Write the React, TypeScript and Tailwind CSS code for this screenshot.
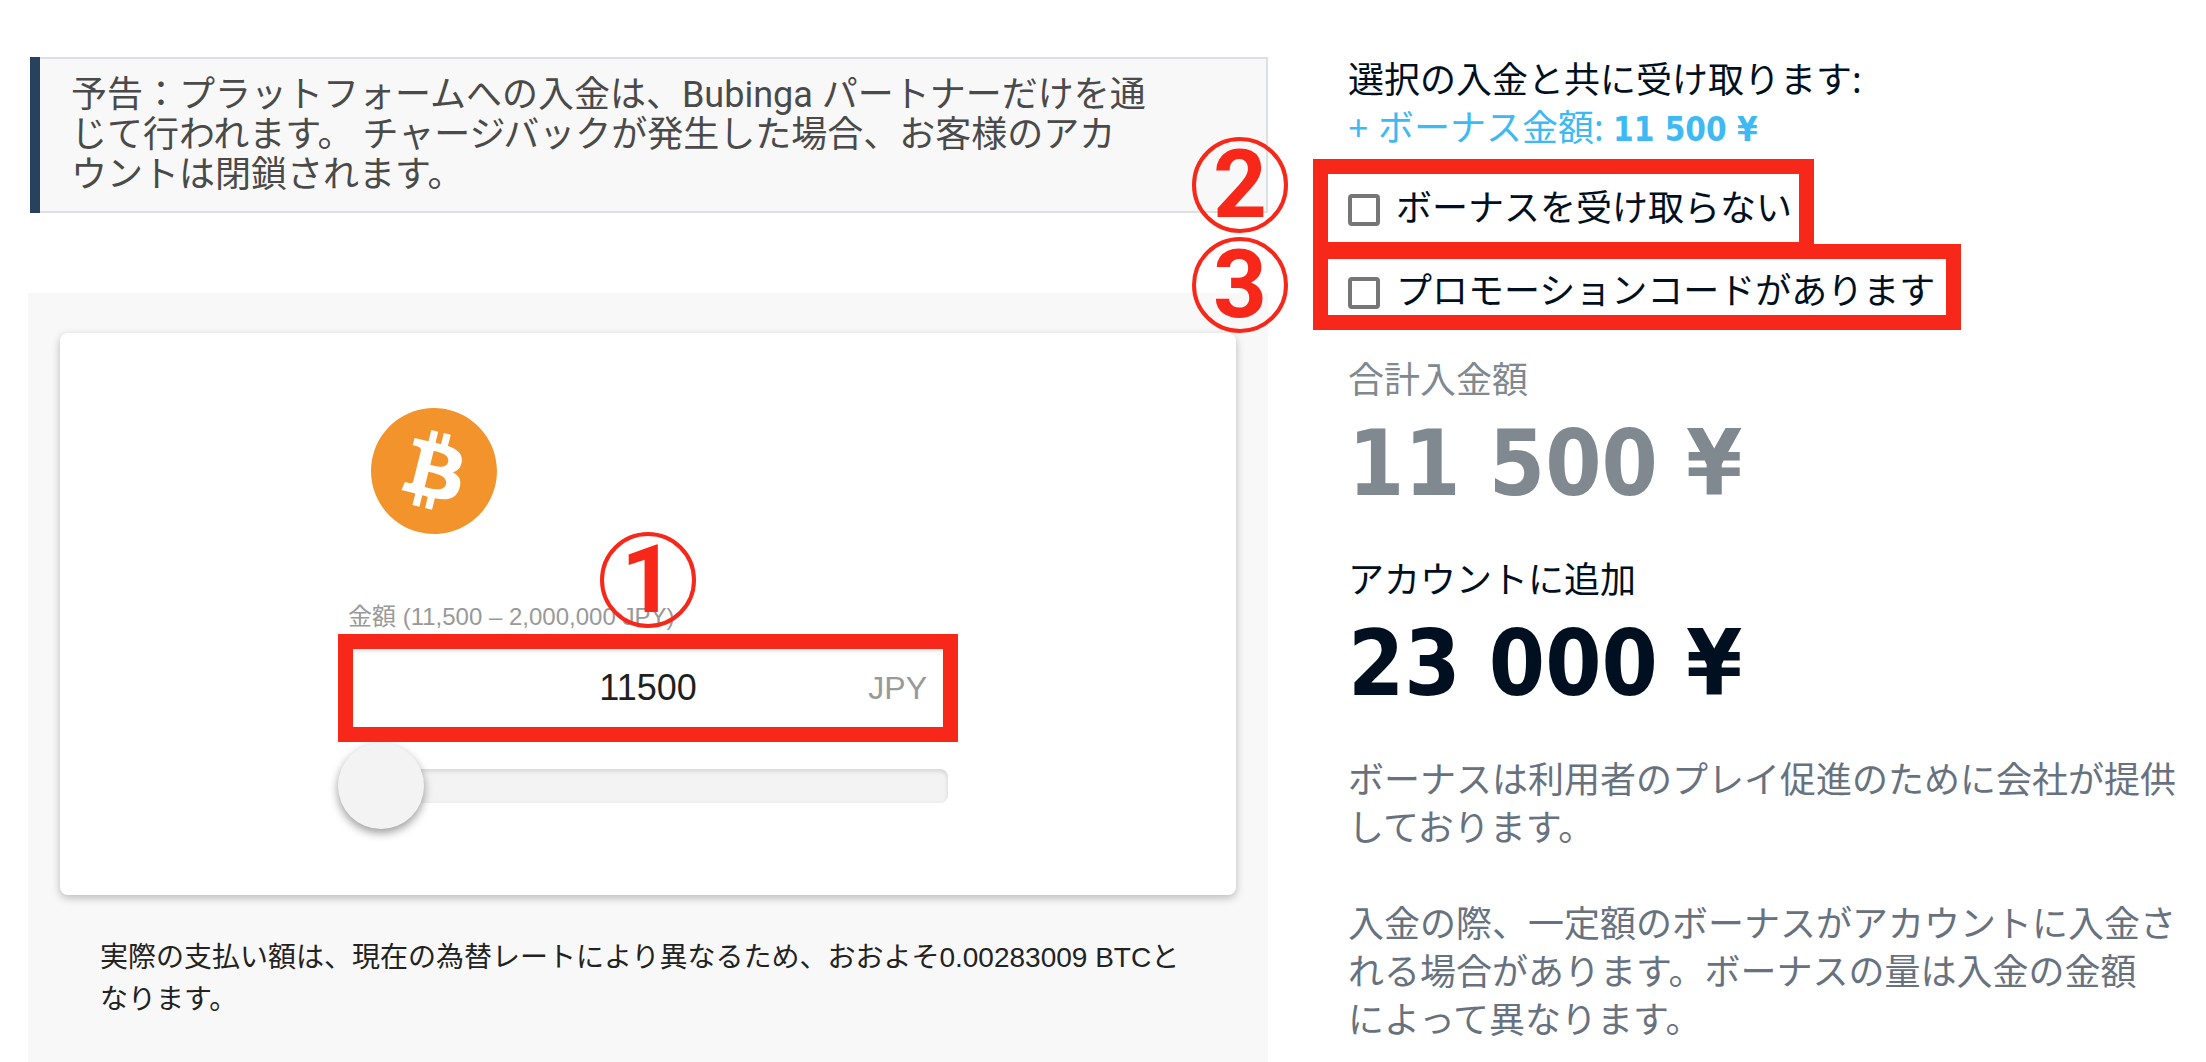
import React, { useState } from 'react';
import { SiBitcoin } from 'react-icons/si';

const MIN_AMOUNT = 11500;
const MAX_AMOUNT = 2000000;

const formatYen = (value: number) =>
  `${String(value).replace(/\B(?=(\d{3})+(?!\d))/g, ' ')} ¥`;

const Marker: React.FC<{ label: string; className: string }> = ({ label, className }) => (
  <span
    className={`absolute z-10 flex size-24 items-center justify-center rounded-full border-4 border-[#f72819] font-[Roboto,sans-serif] text-[94px] leading-none font-bold text-[#f72819] ${className}`}
  >
    {label}
  </span>
);

const Notice: React.FC = () => (
  <div className="ml-0.5 flex bg-[#27415e] pl-2.5">
    <div className="grow border-2 border-l-0 border-[#dce0e4] bg-[#f8f8f8] pt-4 pr-[116px] pb-4 pl-[31px]">
      <p className="font-[Roboto,'Noto_Sans_CJK_JP',sans-serif] text-[36px] leading-10 text-[#4a4a4a]">
        予告：プラットフォームへの入金は、Bubinga パートナーだけを通じて行われます。 チャージバックが発生した場合、お客様のアカウントは閉鎖されます。
      </p>
    </div>
  </div>
);

interface AmountFormProps {
  amount: number;
  onChange: (value: number) => void;
}

const AmountForm: React.FC<AmountFormProps> = ({ amount, onChange }) => (
  <div className="rounded-lg bg-white px-6 pt-[75px] pb-[66px] shadow-[0_3px_8px_rgba(0,0,0,0.25)]">
    <div className="mx-auto max-w-[620px]">
      <SiBitcoin className="ml-[33px] size-[126px] text-[#f2932c]" />
      <div className="relative mt-[67px]">
        <label htmlFor="amount" className="block pl-2.5 text-[24px] leading-8 text-[#999]">
          金額 (11,500 – 2,000,000 JPY)
        </label>
        <Marker label="1" className="-top-[69px] left-[262px]" />
      </div>
      <div className="relative mt-px border-[15px] border-[#f72819]">
        <input
          id="amount"
          type="text"
          inputMode="numeric"
          value={amount}
          onChange={(e) => onChange(Number(e.target.value.replace(/\D/g, '')))}
          className="block h-[78px] w-full bg-white text-center text-[36px] text-[#1f1f1f] shadow-[inset_0_3px_3px_rgba(0,0,0,0.08)] outline-none"
        />
        <span className="absolute inset-y-0 right-4 flex items-center text-[32px] text-[#999]">JPY</span>
      </div>
      <div className="pr-2.5 pl-2.5">
        <input
          type="range"
          aria-label="金額"
          min={MIN_AMOUNT}
          max={MAX_AMOUNT}
          step={500}
          value={amount}
          onChange={(e) => onChange(Number(e.target.value))}
          className="block h-[87px] w-full cursor-pointer appearance-none bg-transparent [&::-webkit-slider-runnable-track]:h-[34px] [&::-webkit-slider-runnable-track]:rounded-lg [&::-webkit-slider-runnable-track]:bg-[#f3f3f4] [&::-webkit-slider-runnable-track]:shadow-[inset_0_2px_5px_rgba(0,0,0,0.14)] [&::-webkit-slider-thumb]:-mt-[26px] [&::-webkit-slider-thumb]:-ml-2.5 [&::-webkit-slider-thumb]:size-[86px] [&::-webkit-slider-thumb]:appearance-none [&::-webkit-slider-thumb]:rounded-full [&::-webkit-slider-thumb]:bg-[#f3f3f3] [&::-webkit-slider-thumb]:shadow-[0_4px_10px_rgba(0,0,0,0.4)]"
        />
      </div>
    </div>
  </div>
);

interface OptionProps {
  id: string;
  label: string;
  marker: string;
  className: string;
  markerClassName: string;
}

const Option: React.FC<OptionProps> = ({ id, label, marker, className, markerClassName }) => (
  <div className={`relative -ml-[35px] flex w-fit items-center border-[15px] border-[#f72819] pl-5 ${className}`}>
    <Marker label={marker} className={markerClassName} />
    <input
      id={id}
      type="checkbox"
      className="size-8 shrink-0 appearance-none rounded-sm border-4 border-[#767676] bg-white checked:bg-[#767676]"
    />
    <label htmlFor={id} className="pb-1 pl-4 leading-10">
      {label}
    </label>
  </div>
);

const Summary: React.FC<{ amount: number }> = ({ amount }) => (
  <aside className="pt-14 font-['Noto_Sans','Noto_Sans_CJK_JP',sans-serif] text-[36px] leading-[48px] text-[#001020]">
    <p>選択の入金と共に受け取ります:</p>
    <p className="text-[#3dbaf3]">
      + ボーナス金額:{' '}
      <strong className="font-['DejaVu_Sans_Condensed','DejaVu_Sans',sans-serif] text-[33px] leading-none font-bold">
        {formatYen(amount)}
      </strong>
    </p>
    <Option
      id="no-bonus"
      label="ボーナスを受け取らない"
      marker="2"
      className="mt-[7px] h-[98px] pt-1 pr-[7px]"
      markerClassName="-top-[37px] -left-[136px]"
    />
    <Option
      id="promo-code"
      label="プロモーションコードがあります"
      marker="3"
      className="-mt-[13px] h-[86px] pt-3 pr-[11px]"
      markerClassName="-top-[22px] -left-[136px]"
    />
    <dl>
      <dt className="mt-[26px] text-[#808890]">合計入金額</dt>
      <dd className="mt-3 font-['DejaVu_Sans_Condensed','DejaVu_Sans',sans-serif] text-[90px] leading-[96px] font-bold text-[#808890]">
        {formatYen(amount)}
      </dd>
      <dt className="mt-11">アカウントに追加</dt>
      <dd className="mt-3 font-['DejaVu_Sans_Condensed','DejaVu_Sans',sans-serif] text-[90px] leading-[96px] font-bold">
        {formatYen(amount * 2)}
      </dd>
    </dl>
    <div className="mt-11 space-y-12 text-[#68727f]">
      <p>ボーナスは利用者のプレイ促進のために会社が提供しております。</p>
      <p>
        入金の際、一定額のボーナスがアカウントに入金される場合があります。ボーナスの量は入金の金額 によって異なります。
      </p>
    </div>
  </aside>
);

const App: React.FC = () => {
  const [amount, setAmount] = useState(MIN_AMOUNT);

  return (
    <div
      lang="ja"
      className="grid min-h-screen grid-cols-[155fr_104fr] gap-20 bg-white pr-[26px] pl-7 font-['Liberation_Sans','Noto_Sans_CJK_JP',sans-serif]"
    >
      <main className="flex flex-col pt-[57px]">
        <Notice />
        <section className="mt-20 grow bg-[#f8f8f8] px-8 pt-10">
          <AmountForm amount={amount} onChange={setAmount} />
          <p className="px-10 pt-[42px] text-[28px] leading-[42px] text-[#222]">
            実際の支払い額は、現在の為替レートにより異なるため、おおよそ0.00283009 BTCとなります。
          </p>
        </section>
      </main>
      <Summary amount={amount} />
    </div>
  );
};

export default App;
